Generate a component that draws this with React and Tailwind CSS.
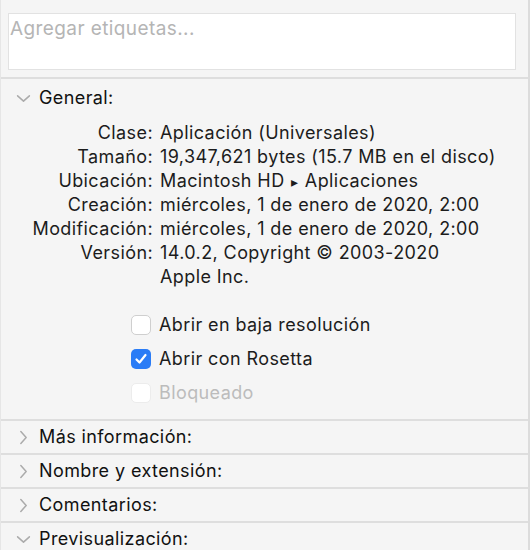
import React from "react";

function Chevron({ open }) {
  return (
    <svg width="15" height="15" viewBox="0 0 14 14" className="shrink-0">
      {open ? (
        <path d="M1.5 4.5 L7 9.5 L12.5 4.5" fill="none" stroke="#ababab" strokeWidth="1.4" strokeLinecap="round" strokeLinejoin="round" />
      ) : (
        <path d="M4.5 1.5 L9.5 7 L4.5 12.5" fill="none" stroke="#ababab" strokeWidth="1.4" strokeLinecap="round" strokeLinejoin="round" />
      )}
    </svg>
  );
}

function Section({ title, open }) {
  return (
    <div className="h-[34px] border-t-2 border-[#dedede] flex items-center pl-[15px] gap-[8px]">
      <Chevron open={open} />
      <span className="text-[#111]">{title}</span>
    </div>
  );
}

function Check({ checked, disabled, label }) {
  return (
    <div className="flex items-center gap-[8px] h-[34px]">
      {checked ? (
        <span className="w-[20px] h-[20px] rounded-[5px] bg-[#2a7cf6] flex items-center justify-center">
          <svg width="14" height="14" viewBox="0 0 14 14">
            <path d="M2.5 7.5 L5.5 10.5 L11.5 3" fill="none" stroke="white" strokeWidth="2.2" strokeLinecap="round" strokeLinejoin="round" />
          </svg>
        </span>
      ) : (
        <span className={"w-[20px] h-[20px] rounded-[5px] bg-white border " + (disabled ? "border-[#ececec]" : "border-[#cfcfcf]")} />
      )}
      <span className={disabled ? "text-[#bcbcbc]" : "text-[#1c1c1c]"}>{label}</span>
    </div>
  );
}

const rows = [
  ["Clase:", "Aplicación (Universales)"],
  ["Tamaño:", "19,347,621 bytes (15.7 MB en el disco)"],
  [
    "Ubicación:",
    <>
      Macintosh HD <span className="text-[14px] leading-[0] mx-[1px]">▸</span> Aplicaciones
    </>,
  ],
  ["Creación:", "miércoles, 1 de enero de 2020, 2:00"],
  ["Modificación:", "miércoles, 1 de enero de 2020, 2:00"],
  ["Versión:", "14.0.2, Copyright © 2003-2020"],
  ["", "Apple Inc."],
];

export default function App() {
  return (
    <div
      className="w-[530px] h-[550px] overflow-hidden bg-[#f5f5f5] border-l border-[#e6e6e6] border-r-2 border-r-[#dcdcdc] text-[18px] leading-[24px] tracking-[0.4px]"
      style={{ fontFamily: "Inter, 'Liberation Sans', sans-serif" }}
    >
      <div className="pt-[13px] pl-[7px] pr-[12px] pb-[7px]">
        <div className="h-[57px] bg-white border border-[#e2e2e2] px-[1px] pt-[3px] text-[#b5b5b5] text-[19px]">
          Agregar etiquetas...
        </div>
      </div>
      <div className="border-t-2 border-[#dedede] pt-[7px]">
        <div className="flex items-center pl-[15px] gap-[8px] h-[24px]">
          <Chevron open />
          <span className="text-[#111]">General:</span>
        </div>
        <div className="mt-[11px] grid grid-cols-[152px_1fr] gap-x-[7px] text-[#1c1c1c]">
          {rows.map(([k, v], i) => (
            <React.Fragment key={i}>
              <div className="text-right h-[24px]">{k}</div>
              <div className="h-[24px]">{v}</div>
            </React.Fragment>
          ))}
        </div>
        <div className="pl-[130px] mt-[19px] pb-[9px]">
          <Check label="Abrir en baja resolución" />
          <Check checked label="Abrir con Rosetta" />
          <Check disabled label="Bloqueado" />
        </div>
      </div>
      <Section title="Más información:" />
      <Section title="Nombre y extensión:" />
      <Section title="Comentarios:" />
      <Section title="Previsualización:" open />
    </div>
  );
}
